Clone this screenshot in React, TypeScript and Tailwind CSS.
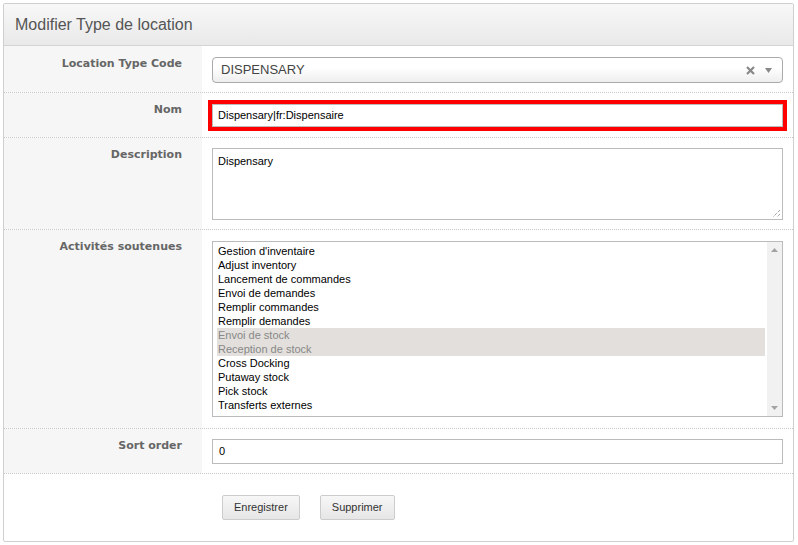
import React from 'react';

const activites = [
  { label: "Gestion d'inventaire", selected: false },
  { label: 'Adjust inventory', selected: false },
  { label: 'Lancement de commandes', selected: false },
  { label: 'Envoi de demandes', selected: false },
  { label: 'Remplir commandes', selected: false },
  { label: 'Remplir demandes', selected: false },
  { label: 'Envoi de stock', selected: true },
  { label: 'Reception de stock', selected: true },
  { label: 'Cross Docking', selected: false },
  { label: 'Putaway stock', selected: false },
  { label: 'Pick stock', selected: false },
  { label: 'Transferts externes', selected: false },
];

function Row({ label, children, className }: { label: string; children: React.ReactNode; className?: string }) {
  return (
    <div className={'flex border-b border-dotted border-[#c8c8c8] ' + (className ?? '')}>
      <div className="w-[198px] shrink-0 bg-[#f6f6f6] pr-[20px] pt-[9px] text-right font-['DejaVu_Sans',sans-serif] text-[11px] font-bold text-[#666]">
        {label}
      </div>
      <div className="flex-1 pl-[10px] pr-[10px]">{children}</div>
    </div>
  );
}

export default function App() {
  return (
    <div className="min-h-[545px] bg-white p-[3px] font-['Liberation_Sans',Arial,sans-serif]">
      <div className="h-[539px] w-[791px] border border-[#cfcfcf] rounded-[2px] overflow-hidden bg-white">
        {/* en-tête */}
        <div className="h-[42px] flex items-center pl-[11px] border-b border-[#d4d4d4] bg-gradient-to-b from-[#f8f8f8] to-[#e9e9e9]">
          <h1 className="text-[16px] text-[#555]">Modifier Type de location</h1>
        </div>

        <Row label="Location Type Code" className="h-[47px] [&>div:first-child]:pt-[10px]">
          <div className="mt-[11px] h-[26px] flex items-center rounded-[4px] border border-[#aaa] bg-gradient-to-b from-white from-40% to-[#eee] pl-[8px] pr-[10px]">
            <span className="flex-1 text-[13px] text-[#444]">DISPENSARY</span>
            <svg className="mr-[10px]" width="9" height="9" viewBox="0 0 9 9">
              <path d="M1 1L8 8M8 1L1 8" stroke="#888" strokeWidth="2.2" />
            </svg>
            <svg width="7" height="5" viewBox="0 0 7 5"><path d="M0 0h7L3.5 5z" fill="#888" /></svg>
          </div>
        </Row>

        <Row label="Nom" className="h-[45px]">
          <div className="mt-[11px] h-[23px] border border-[#bbb] bg-white flex items-center pl-[5px] text-[11px] text-black outline-[4px] outline-solid outline-[#ff0000]">
            Dispensary|fr:Dispensaire
          </div>
        </Row>

        <Row label="Description" className="h-[92px]">
          <div className="relative mt-[10px] h-[72px] border border-[#bbb] bg-white pl-[5px] pt-[4px] text-[11px] text-black">
            Dispensary
            <svg className="absolute right-[1px] bottom-[1px]" width="9" height="9" viewBox="0 0 9 9">
              <path d="M8 1L1 8M8 5L5 8" stroke="#777" strokeWidth="1" strokeDasharray="1 1" />
            </svg>
          </div>
        </Row>

        <Row label="Activités soutenues" className="h-[199px]">
          <div className="mt-[11px] h-[176px] border border-[#bbb] bg-white flex">
            <ul className="flex-1 pt-[2px] pl-[4px] pr-[2px] text-[11px] leading-[14px]">
              {activites.map((a) => (
                <li key={a.label} className={a.selected ? 'bg-[#e2dfdc] text-[#888] pl-[1px]' : 'text-black pl-[1px]'}>
                  {a.label}
                </li>
              ))}
            </ul>
            <div className="w-[15px] bg-[#f1f1f1] flex flex-col items-center justify-between py-[6px]">
              <svg width="7" height="4" viewBox="0 0 7 4"><path d="M0 4h7L3.5 0z" fill="#a3a3a3" /></svg>
              <svg width="7" height="4" viewBox="0 0 7 4"><path d="M0 0h7L3.5 4z" fill="#a3a3a3" /></svg>
            </div>
          </div>
        </Row>

        <Row label="Sort order" className="h-[45px]">
          <div className="mt-[10px] h-[25px] border border-[#bbb] bg-white flex items-center pl-[6px] text-[11px] text-black">0</div>
        </Row>

        {/* boutons */}
        <div className="flex gap-[20px] pl-[218px] pt-[21px]">
          <button className="h-[25px] px-[11px] rounded-[2px] border border-[#ccc] bg-gradient-to-b from-[#f7f7f7] to-[#e6e6e6] text-[11px] text-[#333]">
            Enregistrer
          </button>
          <button className="h-[25px] px-[11px] rounded-[2px] border border-[#ccc] bg-gradient-to-b from-[#f7f7f7] to-[#e6e6e6] text-[11px] text-[#333]">
            Supprimer
          </button>
        </div>
      </div>
    </div>
  );
}
